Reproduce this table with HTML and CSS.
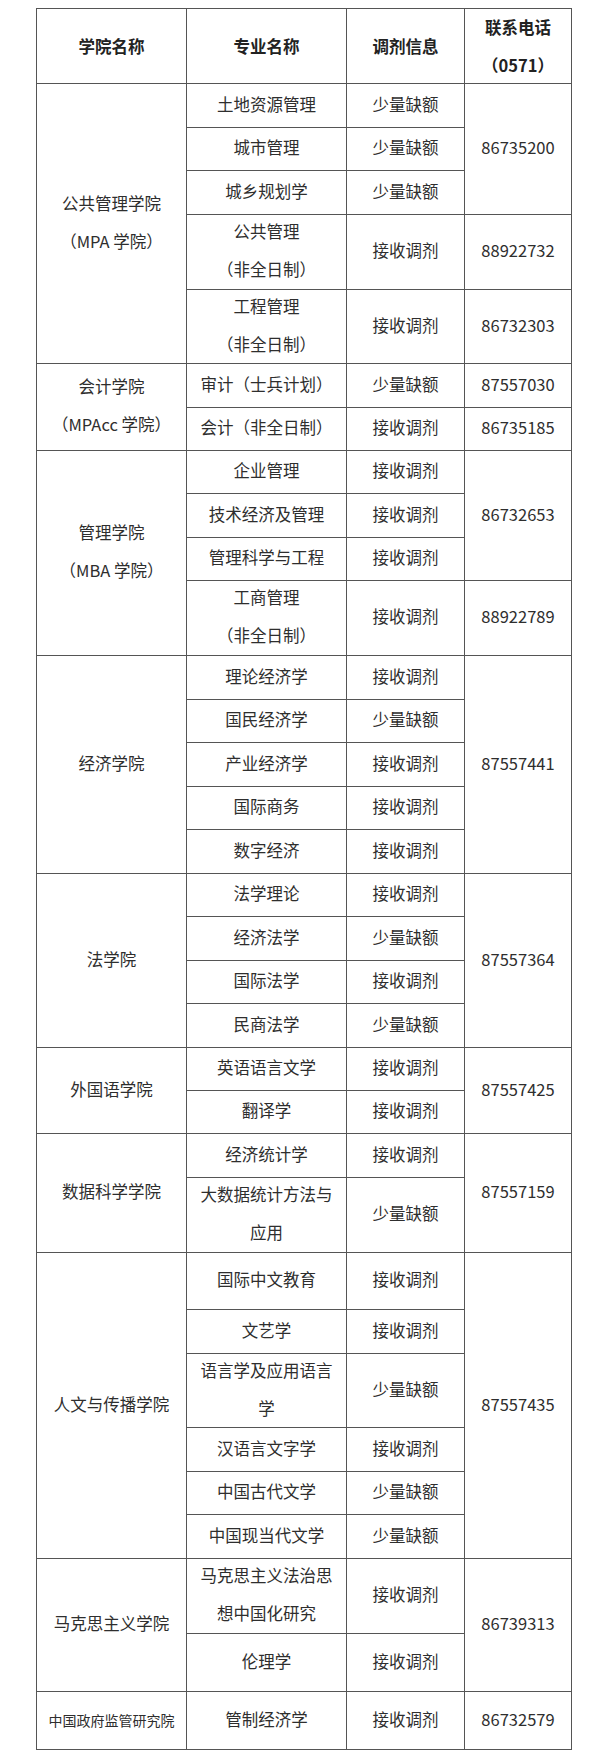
FILE: index.html
```html
<!DOCTYPE html>
<html lang="zh-CN">
<head>
<meta charset="utf-8">
<title>调剂信息</title>
<link rel="stylesheet" href="styles.css">
</head>
<body>
<div class="page">
  <div class="grid">
    <div class="cell head">学院名称</div>
    <div class="cell head">专业名称</div>
    <div class="cell head">调剂信息</div>
    <div class="cell head">联系电话<br>（0571）</div>

    <div class="cell s5">公共管理学院<br>（MPA 学院）</div>
    <div class="cell">土地资源管理</div>
    <div class="cell">少量缺额</div>
    <div class="cell s3">86735200</div>
    <div class="cell">城市管理</div>
    <div class="cell">少量缺额</div>
    <div class="cell">城乡规划学</div>
    <div class="cell">少量缺额</div>
    <div class="cell">公共管理<br>（非全日制）</div>
    <div class="cell">接收调剂</div>
    <div class="cell">88922732</div>
    <div class="cell">工程管理<br>（非全日制）</div>
    <div class="cell">接收调剂</div>
    <div class="cell">86732303</div>

    <div class="cell s2">会计学院<br>（MPAcc 学院）</div>
    <div class="cell">审计（士兵计划）</div>
    <div class="cell">少量缺额</div>
    <div class="cell">87557030</div>
    <div class="cell">会计（非全日制）</div>
    <div class="cell">接收调剂</div>
    <div class="cell">86735185</div>

    <div class="cell s4">管理学院<br>（MBA 学院）</div>
    <div class="cell">企业管理</div>
    <div class="cell">接收调剂</div>
    <div class="cell s3">86732653</div>
    <div class="cell">技术经济及管理</div>
    <div class="cell">接收调剂</div>
    <div class="cell">管理科学与工程</div>
    <div class="cell">接收调剂</div>
    <div class="cell">工商管理<br>（非全日制）</div>
    <div class="cell">接收调剂</div>
    <div class="cell">88922789</div>

    <div class="cell s5">经济学院</div>
    <div class="cell">理论经济学</div>
    <div class="cell">接收调剂</div>
    <div class="cell s5">87557441</div>
    <div class="cell">国民经济学</div>
    <div class="cell">少量缺额</div>
    <div class="cell">产业经济学</div>
    <div class="cell">接收调剂</div>
    <div class="cell">国际商务</div>
    <div class="cell">接收调剂</div>
    <div class="cell">数字经济</div>
    <div class="cell">接收调剂</div>

    <div class="cell s4">法学院</div>
    <div class="cell">法学理论</div>
    <div class="cell">接收调剂</div>
    <div class="cell s4">87557364</div>
    <div class="cell">经济法学</div>
    <div class="cell">少量缺额</div>
    <div class="cell">国际法学</div>
    <div class="cell">接收调剂</div>
    <div class="cell">民商法学</div>
    <div class="cell">少量缺额</div>

    <div class="cell s2">外国语学院</div>
    <div class="cell">英语语言文学</div>
    <div class="cell">接收调剂</div>
    <div class="cell s2">87557425</div>
    <div class="cell">翻译学</div>
    <div class="cell">接收调剂</div>

    <div class="cell s2">数据科学学院</div>
    <div class="cell">经济统计学</div>
    <div class="cell">接收调剂</div>
    <div class="cell s2">87557159</div>
    <div class="cell">大数据统计方法与应用</div>
    <div class="cell">少量缺额</div>

    <div class="cell s6">人文与传播学院</div>
    <div class="cell">国际中文教育</div>
    <div class="cell">接收调剂</div>
    <div class="cell s6">87557435</div>
    <div class="cell">文艺学</div>
    <div class="cell">接收调剂</div>
    <div class="cell">语言学及应用语言学</div>
    <div class="cell">少量缺额</div>
    <div class="cell">汉语言文字学</div>
    <div class="cell">接收调剂</div>
    <div class="cell">中国古代文学</div>
    <div class="cell">少量缺额</div>
    <div class="cell">中国现当代文学</div>
    <div class="cell">少量缺额</div>

    <div class="cell s2">马克思主义学院</div>
    <div class="cell">马克思主义法治思想中国化研究</div>
    <div class="cell">接收调剂</div>
    <div class="cell s2">86739313</div>
    <div class="cell">伦理学</div>
    <div class="cell">接收调剂</div>

    <div class="cell small">中国政府监管研究院</div>
    <div class="cell">管制经济学</div>
    <div class="cell">接收调剂</div>
    <div class="cell">86732579</div>
  </div>
</div>
</body>
</html>
```

FILE: styles.css
```css
html, body {
  margin: 0;
  padding: 0;
  background: #ffffff;
}

.page {
  padding: 8px 0 0 36px;
}

.grid {
  display: grid;
  width: 536px;
  box-sizing: border-box;
  grid-template-columns: 150px 160px 118px 107px;
  grid-template-rows:
    75px
    44px 43px 44px 75px 74px
    44px 43px
    43px 44px 43px 75px
    44px 43px 44px 43px 44px
    43px 44px 43px 44px
    43px 43px
    44px 75px
    57px 44px 74px 44px 43px 44px
    75px 58px
    58px;
  border-top: 1px solid #555;
  border-left: 1px solid #555;
  font-family: "Noto Sans CJK SC", "Noto Sans", sans-serif;
  font-size: 16.5px;
  color: #2e2e2e;
}

.cell {
  box-sizing: border-box;
  border-right: 1px solid #555;
  border-bottom: 1px solid #555;
  display: flex;
  align-items: center;
  justify-content: center;
  text-align: center;
  padding: 0 8px 4px;
  line-height: 38px;
}

.head {
  font-weight: 700;
  color: #222;
  padding-bottom: 0;
}

.small {
  font-size: 14px;
  padding-top: 2px;
}

.s2 { grid-row: span 2; }
.s3 { grid-row: span 3; }
.s4 { grid-row: span 4; }
.s5 { grid-row: span 5; }
.s6 { grid-row: span 6; }
```
